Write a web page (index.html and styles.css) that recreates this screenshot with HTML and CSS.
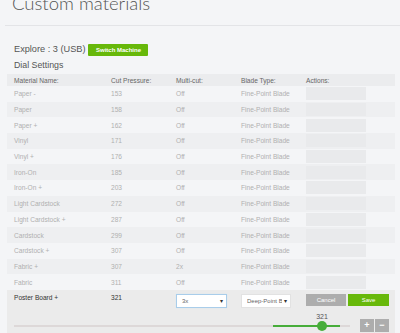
FILE: index.html
```html
<!DOCTYPE html>
<html lang="en">
<head>
<meta charset="utf-8">
<title>Custom materials</title>
<link rel="stylesheet" href="styles.css">
</head>
<body>
<div class="page">
  <header class="page-header">
    <h1 class="title">Custom materials</h1>
  </header>

  <div class="machine">
    <span class="machine-name">Explore : 3 (USB)</span>
    <button class="btn btn-green btn-switch">Switch Machine</button>
  </div>

  <h2 class="section">Dial Settings</h2>

  <div class="table">
    <div class="row head">
      <div>Material Name:</div><div>Cut Pressure:</div><div>Multi-cut:</div><div>Blade Type:</div><div>Actions:</div>
    </div>
    <div class="row"><div>Paper -</div><div>153</div><div>Off</div><div>Fine-Point Blade</div><div><span class="action-box"></span></div></div>
    <div class="row alt"><div>Paper</div><div>158</div><div>Off</div><div>Fine-Point Blade</div><div><span class="action-box"></span></div></div>
    <div class="row"><div>Paper +</div><div>162</div><div>Off</div><div>Fine-Point Blade</div><div><span class="action-box"></span></div></div>
    <div class="row alt"><div>Vinyl</div><div>171</div><div>Off</div><div>Fine-Point Blade</div><div><span class="action-box"></span></div></div>
    <div class="row"><div>Vinyl +</div><div>176</div><div>Off</div><div>Fine-Point Blade</div><div><span class="action-box"></span></div></div>
    <div class="row alt"><div>Iron-On</div><div>185</div><div>Off</div><div>Fine-Point Blade</div><div><span class="action-box"></span></div></div>
    <div class="row"><div>Iron-On +</div><div>203</div><div>Off</div><div>Fine-Point Blade</div><div><span class="action-box"></span></div></div>
    <div class="row alt"><div>Light Cardstock</div><div>272</div><div>Off</div><div>Fine-Point Blade</div><div><span class="action-box"></span></div></div>
    <div class="row"><div>Light Cardstock +</div><div>287</div><div>Off</div><div>Fine-Point Blade</div><div><span class="action-box"></span></div></div>
    <div class="row alt"><div>Cardstock</div><div>299</div><div>Off</div><div>Fine-Point Blade</div><div><span class="action-box"></span></div></div>
    <div class="row"><div>Cardstock +</div><div>307</div><div>Off</div><div>Fine-Point Blade</div><div><span class="action-box"></span></div></div>
    <div class="row alt"><div>Fabric +</div><div>307</div><div>2x</div><div>Fine-Point Blade</div><div><span class="action-box"></span></div></div>
    <div class="row"><div>Fabric</div><div>311</div><div>Off</div><div>Fine-Point Blade</div><div><span class="action-box"></span></div></div>

    <div class="edit">
      <div class="row edit-row">
        <div>Poster Board +</div>
        <div>321</div>
        <div><span class="select select-focus"><span class="select-text">3x</span><span class="caret">▾</span></span></div>
        <div><span class="select select-blade"><span class="select-text">Deep-Point Blade</span><span class="caret">▾</span></span></div>
        <div class="edit-actions">
          <button class="btn btn-gray btn-cancel">Cancel</button>
          <button class="btn btn-green btn-save">Save</button>
        </div>
      </div>
      <div class="slider-row">
        <div class="slider">
          <span class="slider-range"></span>
          <span class="slider-value">321</span>
          <span class="slider-knob"></span>
        </div>
        <div class="steppers">
          <button class="btn btn-gray btn-step">+</button>
          <button class="btn btn-gray btn-step">−</button>
        </div>
      </div>
    </div>
  </div>
</div>
</body>
</html>
```

FILE: styles.css
```css
html, body {
  margin: 0;
  padding: 0;
}

body {
  background: #f4f5f7;
  font-family: "Liberation Sans", Arial, sans-serif;
  color: #555;
  overflow: hidden;
}

.page-header {
  display: flow-root;
  height: 25px;
  margin-left: 5px;
  border-bottom: 1px solid #e3e4e7;
}

.title {
  margin: -7px 0 0 7px;
  font-family: Lato, sans-serif;
  font-weight: 300;
  font-size: 18.5px;
  line-height: 20px;
  color: #555;
  white-space: nowrap;
}

.machine {
  display: flex;
  align-items: center;
  gap: 3px;
  height: 13px;
  margin: 17px 0 0 14px;
}

.machine-name {
  font-size: 9.2px;
  line-height: 13px;
  color: #555;
}

.btn {
  border: 0;
  padding: 0;
  margin: 0;
  font-family: "Liberation Sans", Arial, sans-serif;
  color: #fff;
  cursor: pointer;
}

.btn-green {
  background: #67b80a;
}

.btn-gray {
  background: #adadad;
}

.btn-switch {
  width: 60px;
  height: 12px;
  font-size: 6px;
  font-weight: 700;
  border-radius: 1px;
}

.section {
  margin: 2.5px 0 0 14px;
  font-size: 8.8px;
  line-height: 12px;
  font-weight: 400;
  color: #555;
}

.table {
  margin: 3.5px 5px 0 7px;
}

.row {
  display: grid;
  grid-template-columns: 97px 65px 65px 65px 1fr;
  align-items: center;
  height: 15.7px;
  font-size: 6.6px;
  color: #b0b0b0;
}

.row > div {
  padding-left: 7px;
  white-space: nowrap;
}

.row.alt {
  background: #eeeff1;
}

.row.head {
  height: 12px;
  background: #ebecee;
  color: #666;
}

.action-box {
  display: block;
  width: 60px;
  height: 13px;
  background: #e9eaec;
}

.edit {
  height: 45px;
  background: #ebebeb;
}

.row.edit-row {
  height: 16px;
  align-items: start;
  color: #333;
}

.edit-row > div {
  line-height: 16px;
}

.select {
  display: flex;
  align-items: center;
  box-sizing: border-box;
  height: 14px;
  margin-top: 4px;
  padding: 0 3px 0 5px;
  background: #fff;
  border: 1px solid #e2e2e2;
  font-size: 6px;
  color: #666;
}

.select-focus {
  width: 51px;
  border-color: #a9cdea;
  box-shadow: 0 0 1px #cfe3f3;
}

.select-blade {
  width: 50px;
}

.select-text {
  flex: 1;
  min-width: 0;
  overflow: hidden;
  white-space: nowrap;
}

.caret {
  flex: none;
  font-size: 6px;
  color: #333;
  margin-left: 2px;
}

.edit-actions {
  display: flex;
  gap: 2px;
  padding-top: 4px;
}

.btn-cancel,
.btn-save {
  height: 12px;
  font-size: 6px;
  line-height: 12px;
}

.btn-cancel {
  width: 40px;
}

.btn-save {
  width: 41px;
}

.slider-row {
  display: flex;
  align-items: center;
  height: 13px;
  margin-top: 13px;
  padding-left: 7px;
}

.slider {
  position: relative;
  width: 336px;
  height: 2px;
  margin-top: 2px;
  background: #ddd8d8;
}

.slider-range {
  position: absolute;
  left: 259px;
  top: 0;
  width: 67px;
  height: 2px;
  background: #47ad3a;
}

.slider-knob {
  position: absolute;
  left: 303px;
  top: -4px;
  width: 10px;
  height: 10px;
  border-radius: 50%;
  background: #47ad3a;
}

.slider-value {
  position: absolute;
  left: 298px;
  width: 20px;
  top: -12px;
  text-align: center;
  font-size: 7px;
  color: #555;
}

.steppers {
  display: flex;
  gap: 1px;
  margin-left: 10px;
}

.btn-step {
  width: 14px;
  height: 13px;
  font-size: 9px;
  font-weight: 700;
  line-height: 13px;
}
```
